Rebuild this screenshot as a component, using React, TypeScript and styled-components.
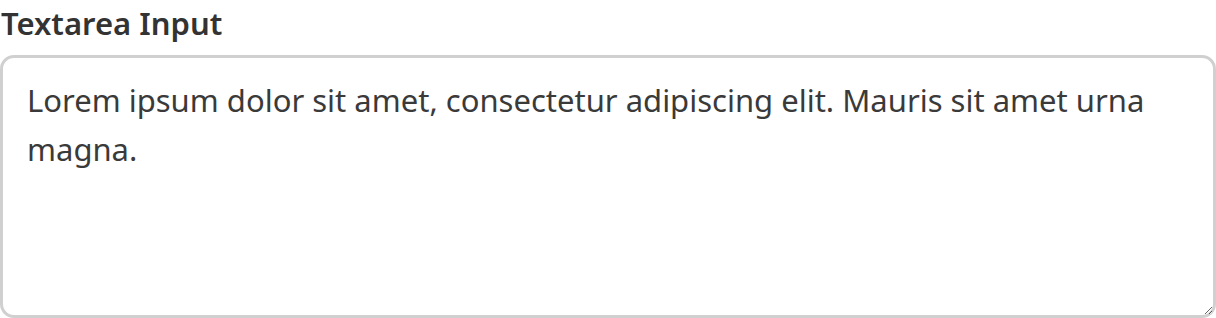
import styled, { createGlobalStyle } from 'styled-components';

const GlobalStyle = createGlobalStyle`
  body {
    margin: 0;
    background: #ffffff;
    font-family: "Noto Sans", "Open Sans", sans-serif;
  }
`;

const Field = styled.div`
  display: flex;
  flex-direction: column;
  gap: 9px;
`;

const Label = styled.label`
  font-size: 31px;
  font-weight: 600;
  color: #333333;
  line-height: 46px;
  padding-left: 1px;
`;

const TextArea = styled.textarea`
  box-sizing: border-box;
  width: 100%;
  height: 263px;
  padding: 18px 24px;
  border: 3px solid #d0d0d0;
  border-radius: 14px;
  font-family: "Noto Sans", "Open Sans", sans-serif;
  font-size: 31px;
  line-height: 48.5px;
  color: #3a3a3a;
  outline: none;
  resize: vertical;
`;

export default function App() {
  return (
    <>
      <GlobalStyle />
      <Field>
        <Label htmlFor="notes">Textarea Input</Label>
        <TextArea
          id="notes"
          defaultValue="Lorem ipsum dolor sit amet, consectetur adipiscing elit. Mauris sit amet urna magna."
        />
      </Field>
    </>
  );
}
